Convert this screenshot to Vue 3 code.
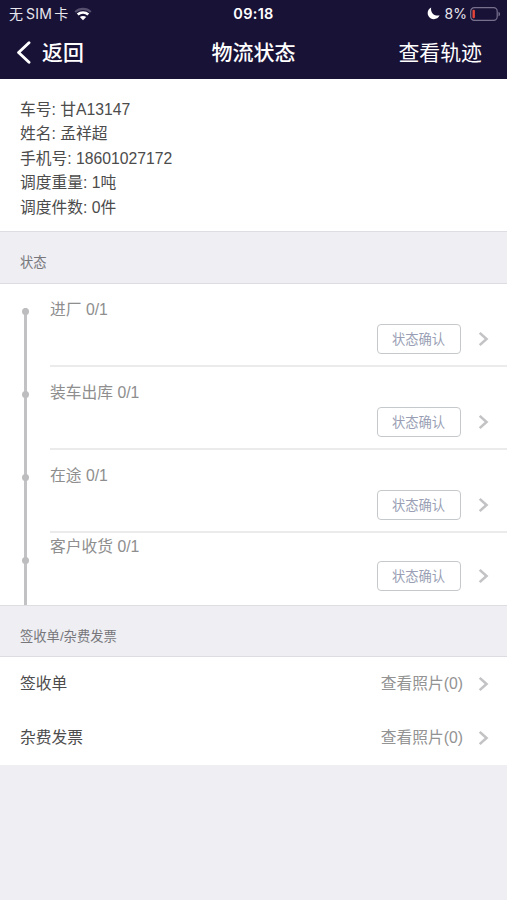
<script setup>
const info = [
  { label: '车号', value: '甘A13147' },
  { label: '姓名', value: '孟祥超' },
  { label: '手机号', value: '18601027172' },
  { label: '调度重量', value: '1吨' },
  { label: '调度件数', value: '0件' },
]
const steps = ['进厂 0/1', '装车出库 0/1', '在途 0/1', '客户收货 0/1']
const documents = ['签收单', '杂费发票']
</script>

<template>
  <div class="screen">
    <header>
      <div class="status">
        <div class="carrier">
          <span>无<b>SIM</b>卡</span>
          <svg class="wifi" width="18" height="14" viewBox="0 0 18 14" fill="none">
            <path d="M1.200 5C5.500 .9 12.500 .9 16.800 5" stroke="#56506e" stroke-width="2.200" />
            <path d="M3.700 7.600C6.700 4.800 11.300 4.800 14.300 7.600" stroke="#fff" stroke-width="2.700" />
            <path d="M5.800 10.100C7.500 8.500 10.500 8.500 12.200 10.100L9 13.300Z" fill="#fff" />
          </svg>
        </div>
        <time>09:18</time>
        <div class="power">
          <svg width="13" height="13" viewBox="0 0 13 13">
            <path d="M4.200.6C.8 2-.3 6 1.600 9.200c2.500 4.200 9 3.900 11-.9C8.200 9.700 3 6 4.200.6Z" fill="#fff" />
          </svg>
          <span>8%</span>
          <svg width="31" height="14" viewBox="0 0 31 14">
            <rect x=".7" y=".7" width="26.500" height="12.600" rx="3.600" fill="none" stroke="#77718d" stroke-width="1.200" />
            <rect x="2.500" y="2.700" width="2.400" height="8.600" rx="1" fill="#e8443a" />
            <path d="M28.500 4.700c2 .8 2 3.800 0 4.600Z" fill="#77718d" />
          </svg>
        </div>
      </div>
      <nav>
        <div class="back">
          <svg width="16" height="24" viewBox="0 0 16 24">
            <path d="M13 1.800 2.600 11.500 13 21.200" fill="none" stroke="#fff" stroke-width="2.900" stroke-linecap="round" stroke-linejoin="round" />
          </svg>
          <span>返回</span>
        </div>
        <h1>物流状态</h1>
        <div class="track">查看轨迹</div>
      </nav>
    </header>

    <section class="info">
      <p v-for="item in info" :key="item.label">{{ item.label }}: {{ item.value }}</p>
    </section>

    <h2>状态</h2>
    <section class="steps">
      <div class="rail">
        <div v-for="step in steps" :key="step" class="segment"><i></i></div>
      </div>
      <div class="list">
        <div v-for="step in steps" :key="step" class="step">
          <p>{{ step }}</p>
          <div class="action">
            <button>状态确认</button>
            <svg class="chevron" width="11" height="16" viewBox="0 0 11 16">
              <path d="M1.700 1.900 8.500 8 1.700 14.100" />
            </svg>
          </div>
        </div>
      </div>
    </section>

    <h2 class="receipts">签收单/杂费发票</h2>
    <section class="documents">
      <div v-for="name in documents" :key="name" class="document">
        <span>{{ name }}</span>
        <span class="photos">查看照片(0)</span>
        <svg class="chevron" width="11" height="16" viewBox="0 0 11 16">
          <path d="M1.700 1.900 8.500 8 1.700 14.100" />
        </svg>
      </div>
    </section>
  </div>
</template>

<style>
body {
  margin: 0;
  background: #eeeef3;
}
</style>

<style scoped>
* {
  box-sizing: border-box;
}
.screen {
  width: 507px;
  height: 900px;
  overflow: hidden;
  background: #eeeef3;
  color: #4c4c4c;
  font: 15.750px/24.400px "Liberation Sans", "Noto Sans CJK SC", sans-serif;
}
p, h1, h2 {
  margin: 0;
  font-weight: 400;
}
header {
  height: 79px;
  background: #191237;
  color: #fff;
}
.status {
  display: grid;
  grid-template-columns: 1fr auto 1fr;
  align-items: center;
  height: 27px;
  padding: 0 6px 0 9px;
  font-family: Inter, "Noto Sans CJK SC", sans-serif;
  font-size: 14px;
  line-height: 27px;
}
.carrier {
  display: flex;
  align-items: center;
  gap: 6px;
  color: #e8e7ee;
}
.carrier b {
  margin: 0 2px 0 3px;
  font-weight: 400;
  letter-spacing: 0.300px;
}
.status time {
  margin-right: 3px;
  font-size: 14.500px;
  font-weight: 600;
  letter-spacing: 0.300px;
}
.power {
  display: flex;
  align-items: center;
  justify-content: flex-end;
}
.power span {
  margin: 0 3px 0 5px;
  color: #e8e7ee;
}
nav {
  display: grid;
  grid-template-columns: 1fr auto 1fr;
  align-items: center;
  height: 52px;
  padding: 0 16px;
  font-size: 20.900px;
  font-weight: 500;
  line-height: 30px;
}
.back {
  display: flex;
  align-items: center;
  gap: 10px;
}
h1 {
  font-size: 21px;
  font-weight: 500;
  line-height: 30px;
}
.track {
  padding-right: 9px;
  text-align: right;
  font-weight: 400;
}
.info {
  height: 152px;
  padding: 19px 20px 0;
  background: #fff;
}
h2 {
  height: 53px;
  padding: 5px 20px 0;
  border-top: 1px solid #dedee2;
  border-bottom: 1px solid #dddde1;
  color: #77777b;
  font-size: 13.300px;
  line-height: 51px;
}
.receipts {
  height: 52px;
}
.steps {
  display: flex;
  height: 321px;
  overflow: hidden;
  background: #fff;
}
.rail {
  flex: 0 0 50px;
  padding-top: 24px;
}
.segment {
  width: 3px;
  height: 83px;
  margin-left: 24px;
  background: #c2c2c4;
}
.segment i {
  display: block;
  width: 7px;
  height: 7px;
  margin-left: -2px;
  border-radius: 50%;
  background: #bdbdbf;
}
.list {
  flex: 1;
}
.step {
  height: 83px;
  padding: 14px 18px 0 0;
  border-bottom: 2px solid #ebebec;
  color: #8e8e8e;
}
.step:last-child {
  height: 72px;
  padding-top: 2px;
  border-bottom: 0;
}
.action {
  display: flex;
  align-items: center;
  justify-content: flex-end;
  gap: 17px;
  margin-top: 2px;
}
button {
  width: 84px;
  height: 30px;
  padding: 1px 1px 0 0;
  border: 1px solid #c6c9cb;
  border-radius: 4px;
  background: #fff;
  color: #9a9fb5;
  font: 13.300px/26px "Liberation Sans", "Noto Sans CJK SC", sans-serif;
}
.chevron path {
  fill: none;
  stroke: #c3c3c5;
  stroke-width: 2.600;
}
.documents {
  height: 108px;
  background: #fff;
}
.document {
  display: flex;
  align-items: center;
  height: 54px;
  padding: 0 18px 0 20px;
}
.photos {
  margin: 0 15px 0 auto;
  color: #939393;
}
</style>
